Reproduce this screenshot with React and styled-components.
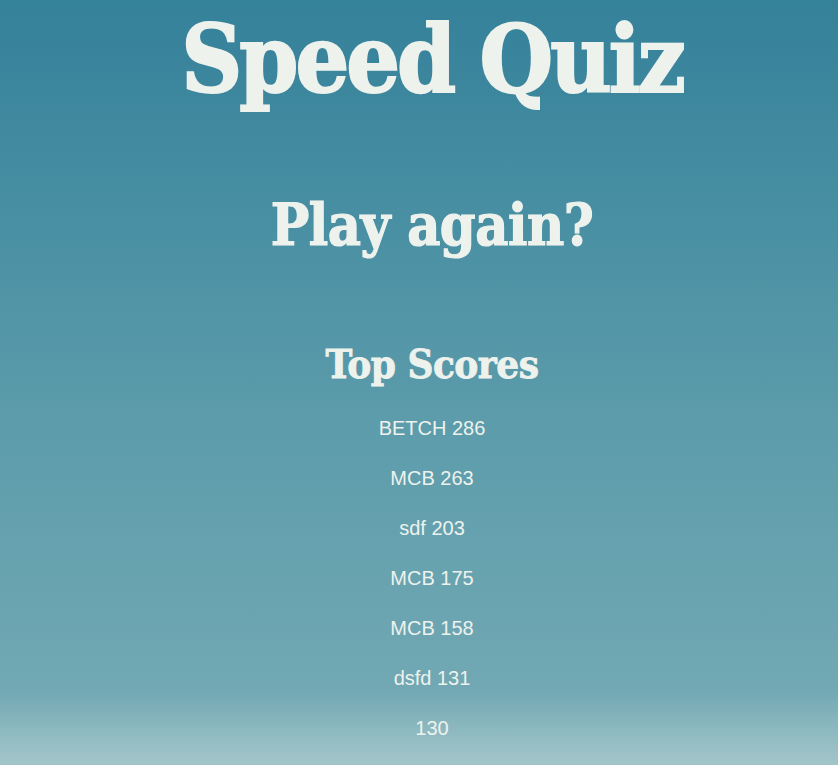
import React from 'react'
import styled, { createGlobalStyle } from 'styled-components'

const GlobalStyle = createGlobalStyle`
  html, body {
    margin: 0;
    padding: 0;
  }
  body {
    min-height: 765px;
    background: linear-gradient(
      to bottom,
      #34819a 0px,
      #5c9cab 420px,
      #71a8b3 690px,
      #8db9c0 730px,
      #a3c5c9 765px
    );
    background-repeat: no-repeat;
  }
`

const Page = styled.main`
  display: flex;
  flex-direction: column;
  align-items: center;
  color: #eef2ed;
  text-align: center;
  height: 765px;
  padding-left: 26px;
  box-sizing: border-box;
  overflow: hidden;
`

const Heading = styled.h1`
  font-family: 'DejaVu Serif Condensed', 'DejaVu Serif', serif;
  font-weight: bold;
  line-height: 1;
  font-size: ${({ size }) => size}px;
  letter-spacing: ${({ spacing }) => spacing}px;
  margin: ${({ top }) => top}px 0 0;
  -webkit-text-stroke: ${({ stroke }) => stroke}px #eef2ed;
`

const ScoreList = styled.ul`
  list-style: none;
  padding: 0;
  margin: 32px 0 0;
  display: flex;
  flex-direction: column;
  gap: 26px;
`

const Score = styled.li`
  font-family: 'Liberation Sans', Arial, sans-serif;
  font-size: 20px;
  line-height: 24px;
`

const scores = [
  ['BETCH', 286],
  ['MCB', 263],
  ['sdf', 203],
  ['MCB', 175],
  ['MCB', 158],
  ['dsfd', 131],
  ['', 130]
]

export default function App () {
  return <>
    <GlobalStyle />
    <Page>
      <Heading size={94} spacing={-3} top={12} stroke={2}>Speed Quiz</Heading>
      <Heading as='h2' size={57} spacing={-0.5} top={90} stroke={1.2}>Play again?</Heading>
      <Heading as='h3' size={40} spacing={-0.5} top={91} stroke={0.8}>Top Scores</Heading>
      <ScoreList>
        {scores.map(([name, score], i) => (
          <Score key={i}>{name ? `${name} ${score}` : score}</Score>
        ))}
      </ScoreList>
    </Page>
  </>
}
